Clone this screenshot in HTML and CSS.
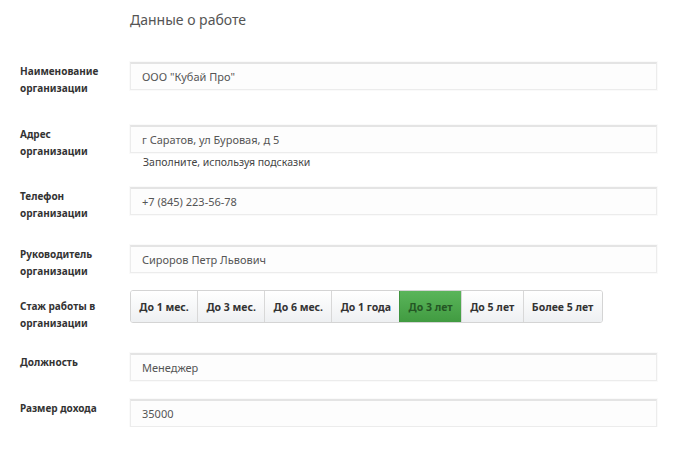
FILE: index.html
```
<!DOCTYPE html>
<html lang="ru">
<head>
<meta charset="utf-8">
<link rel="stylesheet" href="styles.css">
</head>
<body>
<div class="page">
  <h2 class="title">Данные о работе</h2>

  <div class="row row-1">
    <div class="label">Наименование<br>организации</div>
    <div class="control"><div class="input">ООО "Кубай Про"</div></div>
  </div>

  <div class="row row-2">
    <div class="label">Адрес<br>организации</div>
    <div class="control">
      <div class="input">г Саратов, ул Буровая, д 5</div>
      <div class="hint">Заполните, используя подсказки</div>
    </div>
  </div>

  <div class="row row-3">
    <div class="label">Телефон<br>организации</div>
    <div class="control"><div class="input">+7 (845) 223-56-78</div></div>
  </div>

  <div class="row row-4">
    <div class="label">Руководитель<br>организации</div>
    <div class="control"><div class="input">Сироров Петр Львович</div></div>
  </div>

  <div class="row row-5">
    <div class="label label-btns">Стаж работы в<br>организации</div>
    <div class="control">
      <div class="btn-group">
        <span class="btn">До 1 мес.</span>
        <span class="btn">До 3 мес.</span>
        <span class="btn">До 6 мес.</span>
        <span class="btn">До 1 года</span>
        <span class="btn active">До 3 лет</span>
        <span class="btn">До 5 лет</span>
        <span class="btn">Более 5 лет</span>
      </div>
    </div>
  </div>

  <div class="row row-6">
    <div class="label">Должность</div>
    <div class="control"><div class="input">Менеджер</div></div>
  </div>

  <div class="row row-7">
    <div class="label">Размер дохода</div>
    <div class="control"><div class="input">35000</div></div>
  </div>
</div>
</body>
</html>
```
FILE: styles.css
```
html, body {
  margin: 0;
  padding: 0;
  background: #fff;
}
body {
  font-family: "Noto Sans", "Open Sans", sans-serif;
  color: #333;
}
.page {
  padding: 0 20px;
}
.title {
  margin: 0;
  padding-top: 9px;
  margin-left: 110px;
  font-size: 14px;
  font-weight: normal;
  color: #555;
  line-height: 22px;
}
.row {
  display: grid;
  grid-template-columns: 110px 527px;
  align-items: start;
}
.row-1 { margin-top: 31px; }
.row-2 { margin-top: 28px; }
.row-3 { margin-top: 16px; }
.row-4 { margin-top: 23px; }
.row-5 { margin-top: 10px; }
.row-6 { margin-top: 21px; }
.row-7 { margin-top: 18px; }
.label {
  font-size: 10px;
  font-weight: bold;
  line-height: 17px;
  color: #333;
  padding-top: 1px;
  min-height: 34px;
}
.row-6 .label, .row-7 .label {
  min-height: 0;
}
.label-btns {
  padding-top: 8px;
}
.input {
  box-sizing: border-box;
  height: 28px;
  border: 1px solid #ececec;
  border-top: 2px solid #e4e4e4;
  background: #fdfdfd;
  box-shadow: 0 0 0 1px #fafafa;
  padding: 0 11px;
  font-size: 11px;
  line-height: 25px;
  color: #555;
}
.hint {
  font-size: 10.5px;
  color: #444;
  padding-left: 13px;
  line-height: 17px;
  padding-top: 1px;
}
.btn-group {
  display: inline-flex;
  border: 1px solid #d4d4d4;
  border-radius: 3px;
  overflow: hidden;
  height: 33px;
  box-sizing: border-box;
}
.btn {
  display: flex;
  align-items: center;
  padding: 0 8.3px;
  font-size: 10.5px;
  font-weight: bold;
  color: #333;
  background: linear-gradient(#ffffff, #eef0f2);
  border-left: 1px solid #d8d8d8;
}
.btn:first-child {
  border-left: none;
}
.btn.active {
  background: linear-gradient(#5ab55a, #419b41);
  color: #245624;
  border-left-color: #3f943f;
}
```
